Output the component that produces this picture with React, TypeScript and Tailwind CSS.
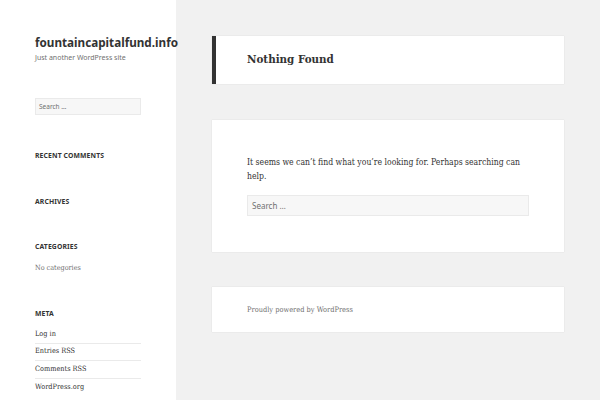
const sans = { fontFamily: '"Noto Sans", sans-serif' };
const serif = { fontFamily: '"DejaVu Serif", serif' };

const WidgetTitle = ({ label, className }: { label: string; className: string }) => (
  <h2
    className={`${className} text-[6.8px] leading-[12px] font-bold uppercase text-[#333] tracking-[0.02em]`}
    style={sans}
  >
    {label}
  </h2>
);

const metaLinks = ['Log in', 'Entries RSS', 'Comments RSS', 'WordPress.org'];

const Sidebar = () => (
  <aside className="w-[176px] shrink-0 bg-white pl-[35px] pr-[35px] pt-[34px] min-h-[400px]">
    <h1
      className="text-[11.7px] leading-[16px] font-bold text-[#333] whitespace-nowrap"
      style={sans}
    >
      fountaincapitalfund.info
    </h1>
    <p className="mt-[2px] text-[7px] leading-[12px] text-[#707070]" style={sans}>
      Just another WordPress site
    </p>
    <div
      className="mt-[34px] h-[17px] w-[106px] bg-[#f7f7f7] border border-[#eaeaea] px-[3px] flex items-center text-[6.5px] text-[#707070]"
      style={sans}
    >
      Search …
    </div>
    <WidgetTitle label="Recent Comments" className="mt-[35px]" />
    <WidgetTitle label="Archives" className="mt-[34px]" />
    <WidgetTitle label="Categories" className="mt-[33px]" />
    <p
      className="mt-[9px] text-[7.2px] leading-[12px] text-[#707070] font-stretch-condensed"
      style={serif}
    >
      No categories
    </p>
    <WidgetTitle label="Meta" className="mt-[34px]" />
    <ul className="mt-[6px] w-[106px]">
      {metaLinks.map((link, i) => (
        <li
          key={link}
          className={`h-[17.6px] flex items-center text-[7.3px] text-[#333] font-stretch-condensed ${
            i < metaLinks.length - 1 ? 'border-b border-[#eaeaea]' : ''
          }`}
          style={serif}
        >
          {link}
        </li>
      ))}
    </ul>
  </aside>
);

const Card = ({ className, children }: { className: string; children: React.ReactNode }) => (
  <div className={`bg-white shadow-[0_0_1px_rgba(0,0,0,0.15)] ${className}`}>{children}</div>
);

export default function App() {
  return (
    <div className="flex w-[600px] h-[400px] overflow-hidden bg-[#f1f1f1]">
      <Sidebar />
      <main className="ml-[36px] w-[352px] pt-[36px]">
        <Card className="h-[48px] border-l-4 border-[#333] pl-[31px] flex items-center">
          <h1 className="text-[11.5px] font-bold text-[#333] font-stretch-condensed" style={serif}>
            Nothing Found
          </h1>
        </Card>
        <Card className="mt-[36px] px-[35px] pt-[35px] pb-[36px]">
          <p className="text-[8.6px] leading-[14px] text-[#333] font-stretch-condensed" style={serif}>
            It seems we can’t find what you’re looking for. Perhaps searching can help.
          </p>
          <div
            className="mt-[12px] h-[21px] bg-[#f7f7f7] border border-[#eaeaea] px-[4px] flex items-center text-[8px] text-[#707070]"
            style={sans}
          >
            Search …
          </div>
        </Card>
        <Card className="mt-[35px] h-[45px] pl-[35px] flex items-center">
          <p className="text-[7.4px] text-[#707070] font-stretch-condensed" style={serif}>
            Proudly powered by WordPress
          </p>
        </Card>
      </main>
    </div>
  );
}
